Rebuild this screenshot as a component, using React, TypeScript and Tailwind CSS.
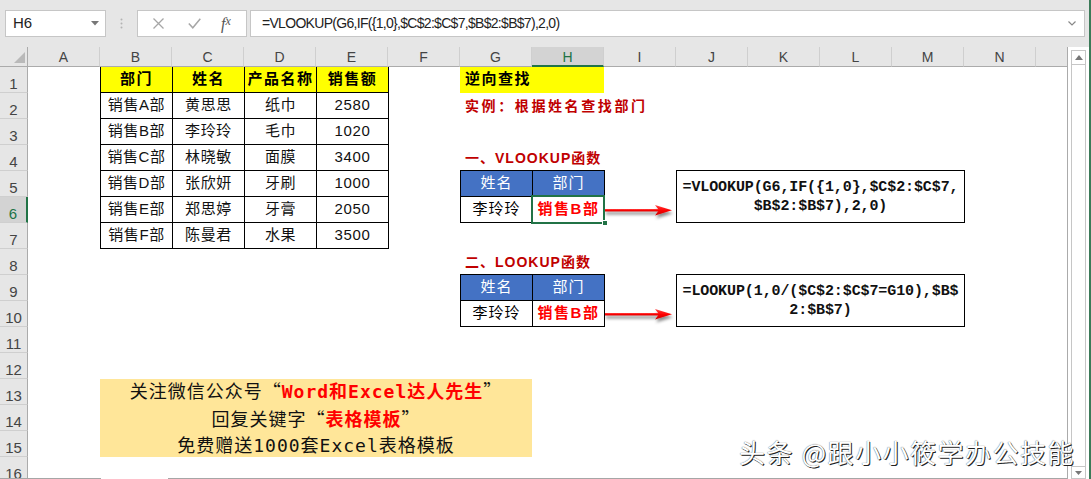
import React from "react"

const COLS = ["A", "B", "C", "D", "E", "F", "G", "H", "I", "J", "K", "L", "M", "N"]
const ROWS = Array.from({ length: 16 }, (_, i) => i + 1)

const SALES = [
  ["销售A部", "黄思思", "纸巾", "2580"],
  ["销售B部", "李玲玲", "毛巾", "1020"],
  ["销售C部", "林晓敏", "面膜", "3400"],
  ["销售D部", "张欣妍", "牙刷", "1000"],
  ["销售E部", "郑思婷", "牙膏", "2050"],
  ["销售F部", "陈曼君", "水果", "3500"],
]

function Arrow({ id }: { id: string }) {
  return (
    <svg width="72" height="26" viewBox="0 0 72 26" className="overflow-visible">
      <defs>
        <filter id={`sh-${id}`} x="-20%" y="-60%" width="140%" height="260%">
          <feDropShadow dx="1" dy="3" stdDeviation="1.6" floodColor="#000" floodOpacity="0.45" />
        </filter>
        <linearGradient id={`rg-${id}`} x1="0" y1="0" x2="0" y2="1">
          <stop offset="0" stopColor="#ff4a4a" />
          <stop offset="0.5" stopColor="#ff0000" />
          <stop offset="1" stopColor="#c80000" />
        </linearGradient>
      </defs>
      <g filter={`url(#sh-${id})`}>
        <rect x="1" y="12" width="54" height="2.5" fill={`url(#rg-${id})`} />
        <path d="M51 8 L68 13.2 L51 18.5 L55 13.2 Z" fill={`url(#rg-${id})`} />
      </g>
    </svg>
  )
}

function LookupTable({ className, selected }: { className: string; selected?: boolean }) {
  return (
    <div
      className={`${className} -mt-px grid h-[53px] w-[145px] grid-cols-[72px_72px] grid-rows-[26px_26px] self-start border-l border-t border-black text-[15px]`}
    >
      <div className="flex items-center justify-center border-b border-r border-black bg-[#4472c4] tracking-[1px] text-white">
        姓名
      </div>
      <div className="flex items-center justify-center border-b border-r border-black bg-[#4472c4] tracking-[1px] text-white">
        部门
      </div>
      <div className="flex items-center justify-center border-b border-r border-black tracking-[1px] text-black">
        李玲玲
      </div>
      <div className="relative flex items-center justify-center border-b border-r border-black font-bold tracking-[1.5px] text-[#ff0000]">
        销售B部
        {selected && (
          <>
            <div className="absolute -left-[2px] -top-[2px] h-[29px] w-[74px] border-2 border-[#217346]" />
            <div className="absolute -bottom-[4px] -right-[4px] h-[6px] w-[6px] border border-white bg-[#217346]" />
          </>
        )}
      </div>
    </div>
  )
}

export default function App() {
  return (
    <div className="relative flex h-[479px] w-[1091px] flex-col overflow-hidden border-r-2 border-[#3b7a58] bg-[#e6e6e6] font-['Liberation_Sans','Noto_Sans_CJK_SC',sans-serif] text-black">
      {/* formula bar */}
      <div className="flex h-[47px] shrink-0 items-start pt-[10px]">
        <div className="ml-[5px] flex h-[27px] w-[101px] items-center justify-between border border-[#c6c6c6] bg-white pl-[7px] pr-[6px] text-[15px] text-[#222]">
          <span>H6</span>
          <svg width="8" height="5" viewBox="0 0 8 5">
            <path d="M0 0 H8 L4 4.5 Z" fill="#777" />
          </svg>
        </div>
        <div className="flex h-[27px] w-[31px] items-center justify-center">
          <svg width="3" height="11" viewBox="0 0 3 11">
            <circle cx="1.5" cy="1.5" r="1" fill="#b3b3b3" />
            <circle cx="1.5" cy="5.5" r="1" fill="#b3b3b3" />
            <circle cx="1.5" cy="9.5" r="1" fill="#b3b3b3" />
          </svg>
        </div>
        <div className="flex h-[27px] w-[110px] items-center border border-[#c6c6c6] bg-white">
          <div className="flex w-[40px] justify-center">
            <svg width="11" height="11" viewBox="0 0 11 11">
              <path d="M0.5 0.5 L10.5 10.5 M10.5 0.5 L0.5 10.5" stroke="#a6a6a6" strokeWidth="1.3" />
            </svg>
          </div>
          <div className="flex w-[32px] justify-center">
            <svg width="13" height="11" viewBox="0 0 13 11">
              <path d="M0.8 5.5 L4.8 9.8 L12.3 0.8" stroke="#a6a6a6" strokeWidth="1.5" fill="none" />
            </svg>
          </div>
          <div className="flex flex-1 justify-center pr-[4px] font-['Liberation_Serif',serif] text-[16px] italic text-[#555]">
            f<span className="text-[12px]">x</span>
          </div>
        </div>
        <div className="ml-[3px] flex h-[27px] w-[835px] items-center justify-between border border-[#c6c6c6] bg-white pl-[11px] pr-[8px]">
          <span className="text-[14px] tracking-[-0.7px] text-[#222]">
            =VLOOKUP(G6,IF({"{"}1,0{"}"},$C$2:$C$7,$B$2:$B$7),2,0)
          </span>
          <svg width="8" height="5" viewBox="0 0 8 5">
            <path d="M0.5 0.5 L4 4 L7.5 0.5" stroke="#888" strokeWidth="1.2" fill="none" />
          </svg>
        </div>
      </div>

      <div className="flex h-[432px]">
        {/* sheet */}
        <div className="flex w-[1068px] flex-col border-r border-[#ababab] bg-white">
          {/* column headers */}
          <div className="flex h-[20px] shrink-0 bg-[#e6e6e6] text-[14px] leading-[16px] text-[#444]">
            <div className="flex w-[28px] items-end justify-end border-b border-r border-[#ababab] pb-[3px] pr-[2px]">
              <svg width="11" height="11" viewBox="0 0 11 11">
                <path d="M11 0 V11 H0 Z" fill="#b9b9b9" />
              </svg>
            </div>
            {COLS.map((c) =>
              c === "H" ? (
                <div
                  key={c}
                  className="flex w-[72px] items-end justify-center border-b-2 border-r border-b-[#217346] border-r-[#cfcfcf] bg-[#d3d3d3] text-[#217346]"
                >
                  {c}
                </div>
              ) : (
                <div
                  key={c}
                  className="flex w-[72px] items-end justify-center border-b border-r border-b-[#ababab] border-r-[#cfcfcf] pb-[1px]"
                >
                  {c}
                </div>
              )
            )}
            <div className="flex-1 border-b border-[#ababab]" />
          </div>

          <div className="flex h-[411px] overflow-hidden">
            {/* row headers */}
            <div className="flex w-[28px] shrink-0 flex-col bg-[#e6e6e6] text-[15px] leading-[17px] text-[#444]">
              {ROWS.map((r) =>
                r === 6 ? (
                  <div
                    key={r}
                    className="flex h-[26px] shrink-0 items-end justify-center border-b border-r-2 border-b-[#cfcfcf] border-r-[#217346] bg-[#d3d3d3] text-[#217346]"
                  >
                    {r}
                  </div>
                ) : (
                  <div
                    key={r}
                    className="flex h-[26px] shrink-0 items-end justify-center border-b border-r border-b-[#cfcfcf] border-r-[#ababab]"
                  >
                    {r}
                  </div>
                )
              )}
            </div>

            {/* cells */}
            <div className="grid grid-cols-[repeat(14,72px)_31px] grid-rows-[repeat(16,26px)]">
              {/* sales table */}
              <div className="col-span-4 col-start-2 row-span-7 row-start-1 -mt-px grid h-[183px] w-[289px] grid-cols-[repeat(4,72px)] grid-rows-[repeat(7,26px)] self-start border-l border-t border-black text-[15px]">
                {["部门", "姓名", "产品名称", "销售额"].map((h) => (
                  <div
                    key={h}
                    className="flex items-center justify-center border-b border-r border-black bg-[#ffff00] font-bold tracking-[1.5px]"
                  >
                    {h}
                  </div>
                ))}
                {SALES.flat().map((v, i) => (
                  <div
                    key={i}
                    className="flex items-center justify-center border-b border-r border-black tracking-[0.6px] text-[#111]"
                  >
                    {v}
                  </div>
                ))}
              </div>

              {/* reverse lookup titles */}
              <div className="col-span-2 col-start-7 row-start-1 -mt-px flex items-center bg-[#ffff00] pl-[5px] text-[15px] font-bold tracking-[1.5px]">
                逆向查找
              </div>
              <div className="col-start-7 row-start-2 flex items-center whitespace-nowrap pl-[5px] text-[14px] font-bold tracking-[2.6px] text-[#c00000]">
                实例：根据姓名查找部门
              </div>
              <div className="col-start-7 row-start-4 flex items-center whitespace-nowrap pl-[5px] text-[14px] font-bold tracking-[1px] text-[#c00000]">
                一、VLOOKUP函数
              </div>
              <div className="col-start-7 row-start-8 flex items-center whitespace-nowrap pl-[5px] text-[14px] font-bold tracking-[1px] text-[#c00000]">
                二、LOOKUP函数
              </div>

              <LookupTable className="col-span-2 col-start-7 row-span-2 row-start-5" selected />
              <LookupTable className="col-span-2 col-start-7 row-span-2 row-start-9" />

              <div className="col-start-9 row-start-6">
                <Arrow id="a" />
              </div>
              <div className="col-start-9 row-start-10">
                <Arrow id="b" />
              </div>

              {/* formula boxes */}
              <div className="col-span-4 col-start-10 row-span-2 row-start-5 -mt-px flex h-[53px] w-[289px] items-center justify-center self-start border border-black text-center font-['Liberation_Mono','Noto_Sans_CJK_SC',monospace] text-[15px] font-bold leading-[19px] tracking-[-0.1px] text-[#111]">
                <p>
                  =VLOOKUP(G6,IF({"{"}1,0{"}"},$C$2:$C$7,
                  <br />
                  $B$2:$B$7),2,0)
                </p>
              </div>
              <div className="col-span-4 col-start-10 row-span-2 row-start-9 -mt-px flex h-[53px] w-[289px] items-center justify-center self-start border border-black text-center font-['Liberation_Mono','Noto_Sans_CJK_SC',monospace] text-[15px] font-bold leading-[19px] tracking-[-0.1px] text-[#111]">
                <p>
                  =LOOKUP(1,0/($C$2:$C$7=G10),$B$
                  <br />
                  2:$B$7)
                </p>
              </div>

              {/* promo banner */}
              <div className="col-span-6 col-start-2 row-span-3 row-start-13 flex flex-col items-center justify-center bg-[#ffe699] font-['DejaVu_Sans_Mono','Noto_Sans_CJK_SC',monospace] text-[18px] leading-[26px] tracking-[1px] text-[#111]">
                <p>
                  关注微信公众号
                  <span className="font-['Noto_Sans_CJK_SC',sans-serif]">“</span>
                  <span className="font-bold text-[#ff0000]">Word和Excel达人先生</span>
                  <span className="font-['Noto_Sans_CJK_SC',sans-serif]">”</span>
                </p>
                <p>
                  回复关键字
                  <span className="font-['Noto_Sans_CJK_SC',sans-serif]">“</span>
                  <span className="font-bold text-[#ff0000]">表格模板</span>
                  <span className="font-['Noto_Sans_CJK_SC',sans-serif]">”</span>
                </p>
                <p>免费赠送1000套Excel表格模板</p>
              </div>
            </div>
          </div>

          {/* bottom edge */}
          <div className="flex h-[1px] shrink-0">
            <div className="w-[101px] bg-[#a6a6a6]" />
            <div className="w-[67px] bg-white" />
            <div className="flex-1 bg-[#a6a6a6]" />
          </div>
        </div>

        {/* vertical scrollbar */}
        <div className="flex w-[21px] flex-col bg-white pl-[3px] pt-[3px]">
          <div className="flex w-[15px] flex-1 flex-col justify-between border border-[#c6c6c6] bg-white">
            <div className="flex h-[14px] items-center justify-center border-b border-[#c6c6c6]">
              <svg width="8" height="5" viewBox="0 0 8 5">
                <path d="M0 5 H8 L4 0 Z" fill="#777" />
              </svg>
            </div>
            <div className="flex h-[12px] items-center justify-center border-t border-[#c6c6c6]">
              <svg width="7" height="4" viewBox="0 0 7 4">
                <path d="M0 0 H7 L3.5 4 Z" fill="#777" />
              </svg>
            </div>
          </div>
        </div>
      </div>

      {/* watermark */}
      <div className="absolute bottom-[12px] right-[14px] whitespace-nowrap font-['Noto_Sans_CJK_SC',sans-serif] text-[26px] leading-[30px] tracking-[1.5px] text-white [text-shadow:1px_1px_0_#222,0_0_1px_#333]">
        头条 @跟小小筱学办公技能
      </div>
    </div>
  )
}
